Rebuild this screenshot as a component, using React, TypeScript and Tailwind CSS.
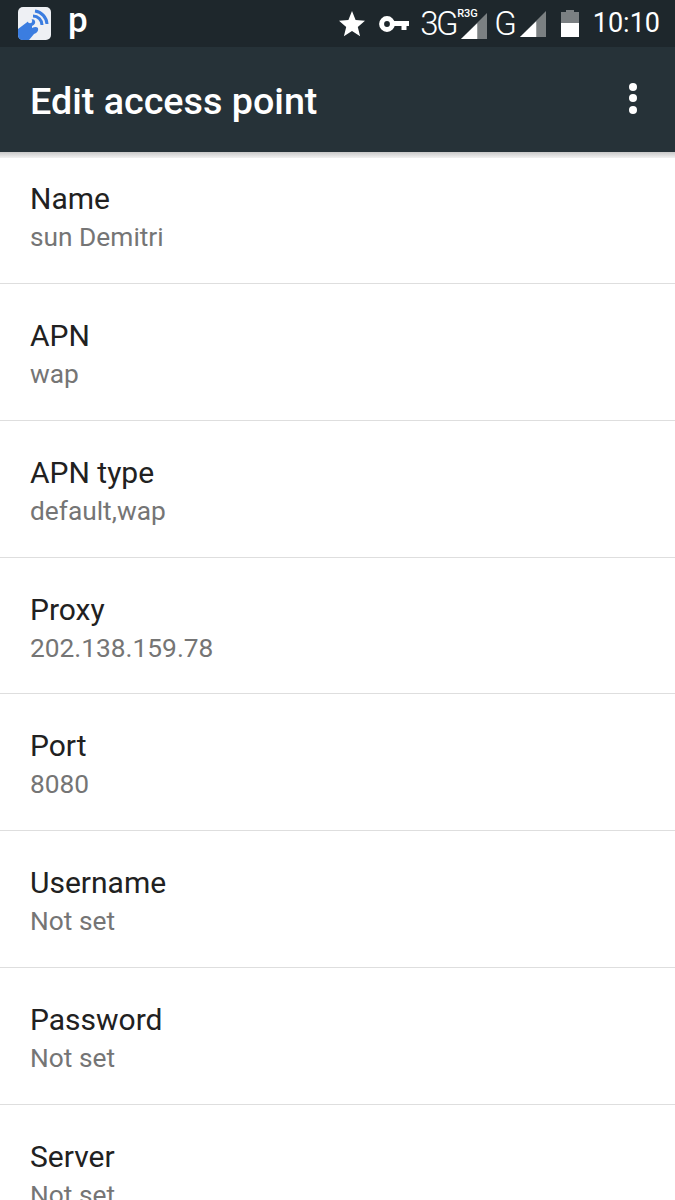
const ROWS = [
  { title: "Name", value: "sun Demitri" },
  { title: "APN", value: "wap" },
  { title: "APN type", value: "default,wap" },
  { title: "Proxy", value: "202.138.159.78" },
  { title: "Port", value: "8080" },
  { title: "Username", value: "Not set" },
  { title: "Password", value: "Not set" },
  { title: "Server", value: "Not set" },
];

function AppIcon() {
  return (
    <svg width="33" height="33" viewBox="0 0 33 33" className="shrink-0">
      <rect x="0" y="0" width="33" height="33" rx="5" fill="#eef0f4" />
      <path d="M0 28 V22 L8 16 L12 13 Q16 11 17 14 Q18 17 14 19 L14 21 Q18 19 20 21 Q21 25 16 27 L11 33 H5 Q0 33 0 28 Z" fill="#3b7de0" />
      <circle cx="12" cy="14" r="2.2" fill="#eef0f4" />
      <path d="M15 9 A9 9 0 0 1 24 18 M17 4 A14 14 0 0 1 29 17" fill="none" stroke="#3b7de0" strokeWidth="3" />
    </svg>
  );
}

function Signal({ w }: { w: number }) {
  return (
    <svg width={w} height={w} viewBox="0 0 24 24" className="shrink-0">
      <path d="M24 0 V24 H0 Z" fill="#7b8082" />
      <path d="M15 9.5 V24 H0 Z" fill="#ffffff" />
    </svg>
  );
}

function StatusBar() {
  return (
    <div className="flex h-[47px] items-center bg-[#1e272c] pl-[18px] pr-[15px] text-white">
      <AppIcon />
      <span className="ml-[17px] mt-[-6px] text-[35px] font-medium leading-none">p</span>
      <div className="ml-auto flex items-center">
        <svg width="28" height="28" viewBox="0 0 28 28" className="mr-[13px]">
          <path d="M14 1 L17.6 10 L27 10.7 L19.8 16.9 L22.1 26.2 L14 21.1 L5.9 26.2 L8.2 16.9 L1 10.7 L10.4 10 Z" fill="#ffffff" />
        </svg>
        <svg width="30" height="16" viewBox="0 0 30 16" className="mr-[11px]">
          <circle cx="8" cy="8" r="5.4" fill="none" stroke="#ffffff" strokeWidth="5" />
          <path d="M13 5 H30 V10 H27.5 V14 H22.5 V10 H13 Z" fill="#ffffff" />
        </svg>
        <span className="text-[33px] font-light leading-none tracking-[-2.5px]">3G</span>
        <div className="relative ml-[5px] mr-[7px] h-[30px] w-[26px]">
          <span className="absolute left-[-4px] top-[-1px] text-[11px] font-medium leading-none">R3G</span>
          <div className="absolute bottom-0 left-0">
            <Signal w={26} />
          </div>
        </div>
        <span className="text-[33px] font-light leading-none">G</span>
        <div className="ml-[3px] mr-[15px]">
          <Signal w={26} />
        </div>
        <div className="mr-[14px] flex h-[27px] w-[18px] flex-col items-center">
          <div className="h-[2px] w-[8px] bg-[#7b8082]" />
          <div className="h-[11px] w-full bg-[#7b8082]" />
          <div className="h-[14px] w-full bg-white" />
        </div>
        <span className="text-[27px] leading-none">10:10</span>
      </div>
    </div>
  );
}

function AppBar() {
  return (
    <div className="flex h-[105px] items-center justify-between bg-[#263238] pl-[30px] pr-[38px]">
      <h1 className="mt-[5px] text-[37.7px] font-medium leading-none text-white">Edit access point</h1>
      <div className="mt-[-3px] flex flex-col gap-[3.5px]">
        <div className="h-[8px] w-[8px] rounded-full bg-white" />
        <div className="h-[8px] w-[8px] rounded-full bg-white" />
        <div className="h-[8px] w-[8px] rounded-full bg-white" />
      </div>
    </div>
  );
}

export default function App() {
  return (
    <div className="relative h-[1200px] w-[675px] overflow-hidden bg-white font-['Roboto',sans-serif]">
      <StatusBar />
      <AppBar />
      <div className="h-[6px] bg-gradient-to-b from-[#c8c8c8] to-[#f2f2f2]" />
      <div className="mt-[-11px]">
        {ROWS.map((row) => (
          <div key={row.title} className="flex h-[136.85px] flex-col border-b border-[#dedede] pl-[30px] pt-[33px]">
            <div className="text-[30px] leading-[38px] text-[#212121]">{row.title}</div>
            <div className="text-[26.3px] leading-[38px] text-[#757575]">{row.value}</div>
          </div>
        ))}
      </div>
    </div>
  );
}
